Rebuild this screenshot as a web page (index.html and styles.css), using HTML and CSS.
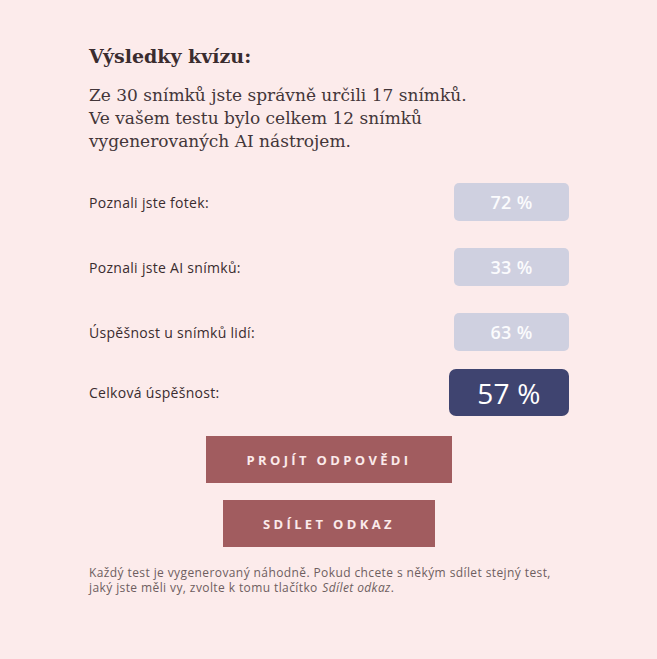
FILE: index.html
```html
<!DOCTYPE html>
<html lang="cs">
<head>
<meta charset="utf-8">
<link rel="stylesheet" href="styles.css">
</head>
<body>
<main class="results">
  <h1 class="title">Výsledky kvízu:</h1>
  <p class="summary">Ze 30 snímků jste správně určili 17 snímků.<br>Ve vašem testu bylo celkem 12 snímků<br>vygenerovaných AI nástrojem.</p>
  <div class="stats">
    <div class="row"><span class="label">Poznali jste fotek:</span><span class="score">72 %</span></div>
    <div class="row"><span class="label">Poznali jste AI snímků:</span><span class="score">33 %</span></div>
    <div class="row"><span class="label">Úspěšnost u snímků lidí:</span><span class="score">63 %</span></div>
    <div class="row total"><span class="label">Celková úspěšnost:</span><span class="score score-total">57 %</span></div>
  </div>
  <div class="actions">
    <button class="btn btn-wide">PROJÍT ODPOVĚDI</button>
    <button class="btn btn-narrow">SDÍLET ODKAZ</button>
  </div>
  <p class="note">Každý test je vygenerovaný náhodně. Pokud chcete s někým sdílet stejný test, jaký jste měli vy, zvolte k tomu tlačítko <em class="note-link">Sdílet odkaz</em>.</p>
</main>
</body>
</html>
```

FILE: styles.css
```css
html, body {
  margin: 0;
  padding: 0;
  background: #fcebeb;
}
body {
  height: 659px;
}
.results {
  width: 480px;
  margin: 0 0 0 89px;
  padding-top: 41px;
  display: flex;
  flex-direction: column;
}
.title {
  margin: 0;
  font-family: "DejaVu Serif", serif;
  font-size: 19px;
  font-weight: bold;
  color: #3a2c2f;
  line-height: 30px;
}
.summary {
  margin: 13px 0 0 0;
  font-family: "DejaVu Serif", serif;
  font-size: 17px;
  line-height: 23px;
  color: #433639;
}
.stats {
  margin-top: 30px;
  display: flex;
  flex-direction: column;
  gap: 27px;
}
.row {
  display: flex;
  align-items: center;
  justify-content: space-between;
  height: 38px;
}
.row.total {
  height: 47px;
  margin-top: -9px;
}
.label {
  font-family: "Open Sans", sans-serif;
  font-size: 14px;
  letter-spacing: 0.3px;
  color: #3a2c2f;
}
.score {
  width: 115px;
  height: 38px;
  border-radius: 5px;
  background: #cfd0e0;
  color: #fbfbfd;
  font-family: "Open Sans", sans-serif;
  font-weight: 600;
  font-size: 18px;
  letter-spacing: 0.3px;
  display: flex;
  align-items: center;
  justify-content: center;
}
.score-total {
  width: 120px;
  height: 47px;
  border-radius: 7px;
  background: #3f4470;
  color: #ffffff;
  font-size: 28px;
  font-weight: 500;
}
.actions {
  margin-top: 20px;
  display: flex;
  flex-direction: column;
  align-items: center;
  gap: 17px;
}
.btn {
  border: none;
  background: #a15c5f;
  color: #fbeaea;
  height: 47px;
  font-family: "Open Sans", sans-serif;
  font-weight: 700;
  font-size: 13px;
  letter-spacing: 3.35px;
  padding: 0;
  cursor: pointer;
}
.btn-wide {
  width: 246px;
}
.btn-narrow {
  width: 212px;
}
.note {
  margin: 18px 0 0 0;
  font-family: "Open Sans", sans-serif;
  font-size: 12px;
  letter-spacing: 0.4px;
  line-height: 15px;
  color: #6e5e60;
}
.note-link {
  font-style: italic;
  margin-left: 1px;
}
```
